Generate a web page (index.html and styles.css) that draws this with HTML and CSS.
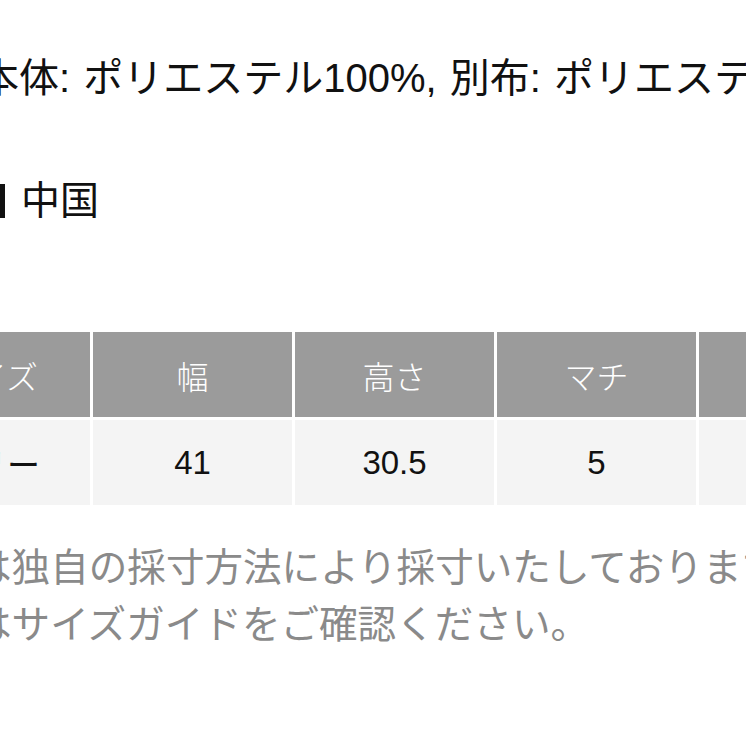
FILE: index.html
```html
<!DOCTYPE html>
<html lang="ja">
<head>
<meta charset="utf-8">
<link rel="stylesheet" href="styles.css">
</head>
<body>
<main class="page">
  <p class="spec">本体: ポリエステル100%, 別布: ポリエステル100%</p>
  <p class="origin"><span class="bar"></span>中国</p>
  <div class="size-table">
    <div class="cell head">サイズ</div>
    <div class="cell head">幅</div>
    <div class="cell head">高さ</div>
    <div class="cell head">マチ</div>
    <div class="cell head">持ち手</div>
    <div class="cell body">フリー</div>
    <div class="cell body">41</div>
    <div class="cell body">30.5</div>
    <div class="cell body">5</div>
    <div class="cell body">60</div>
  </div>
  <div class="notes">
    <p class="note">は独自の採寸方法により採寸いたしております。</p>
    <p class="note">はサイズガイドをご確認ください。</p>
  </div>
</main>
</body>
</html>
```

FILE: styles.css
```css
html, body {
  margin: 0;
  padding: 0;
  width: 746px;
  height: 746px;
  overflow: hidden;
  background: #ffffff;
}

.page {
  font-family: "Liberation Sans", "Noto Sans CJK JP", sans-serif;
  color: #111111;
  padding-top: 50px;
}

.spec {
  margin: 0 0 0 -21px;
  font-size: 40px;
  line-height: 56px;
  word-spacing: 2px;
  white-space: nowrap;
}

.origin {
  margin: 67px 0 0 0;
  font-size: 39px;
  line-height: 56px;
  white-space: nowrap;
  display: flex;
  align-items: center;
}

.bar {
  display: inline-block;
  width: 5px;
  height: 34px;
  background: #111111;
  margin-right: 16px;
}

.size-table {
  margin: 103px 0 0 -109px;
  display: grid;
  grid-template-columns: repeat(5, 199px);
  grid-template-rows: 85px 85px;
  column-gap: 3px;
  row-gap: 3px;
}

.cell {
  display: flex;
  align-items: center;
  justify-content: center;
  white-space: nowrap;
}

.head {
  background: #9b9b9b;
  color: #ffffff;
  font-size: 32px;
  font-weight: 300;
}

.body {
  background: #f4f4f4;
  color: #111111;
  font-size: 33px;
}

.notes {
  margin: 34px 0 0 -27px;
}

.note {
  margin: 0;
  font-size: 38.6px;
  line-height: 57px;
  color: #8a8a8a;
  white-space: nowrap;
}
```
